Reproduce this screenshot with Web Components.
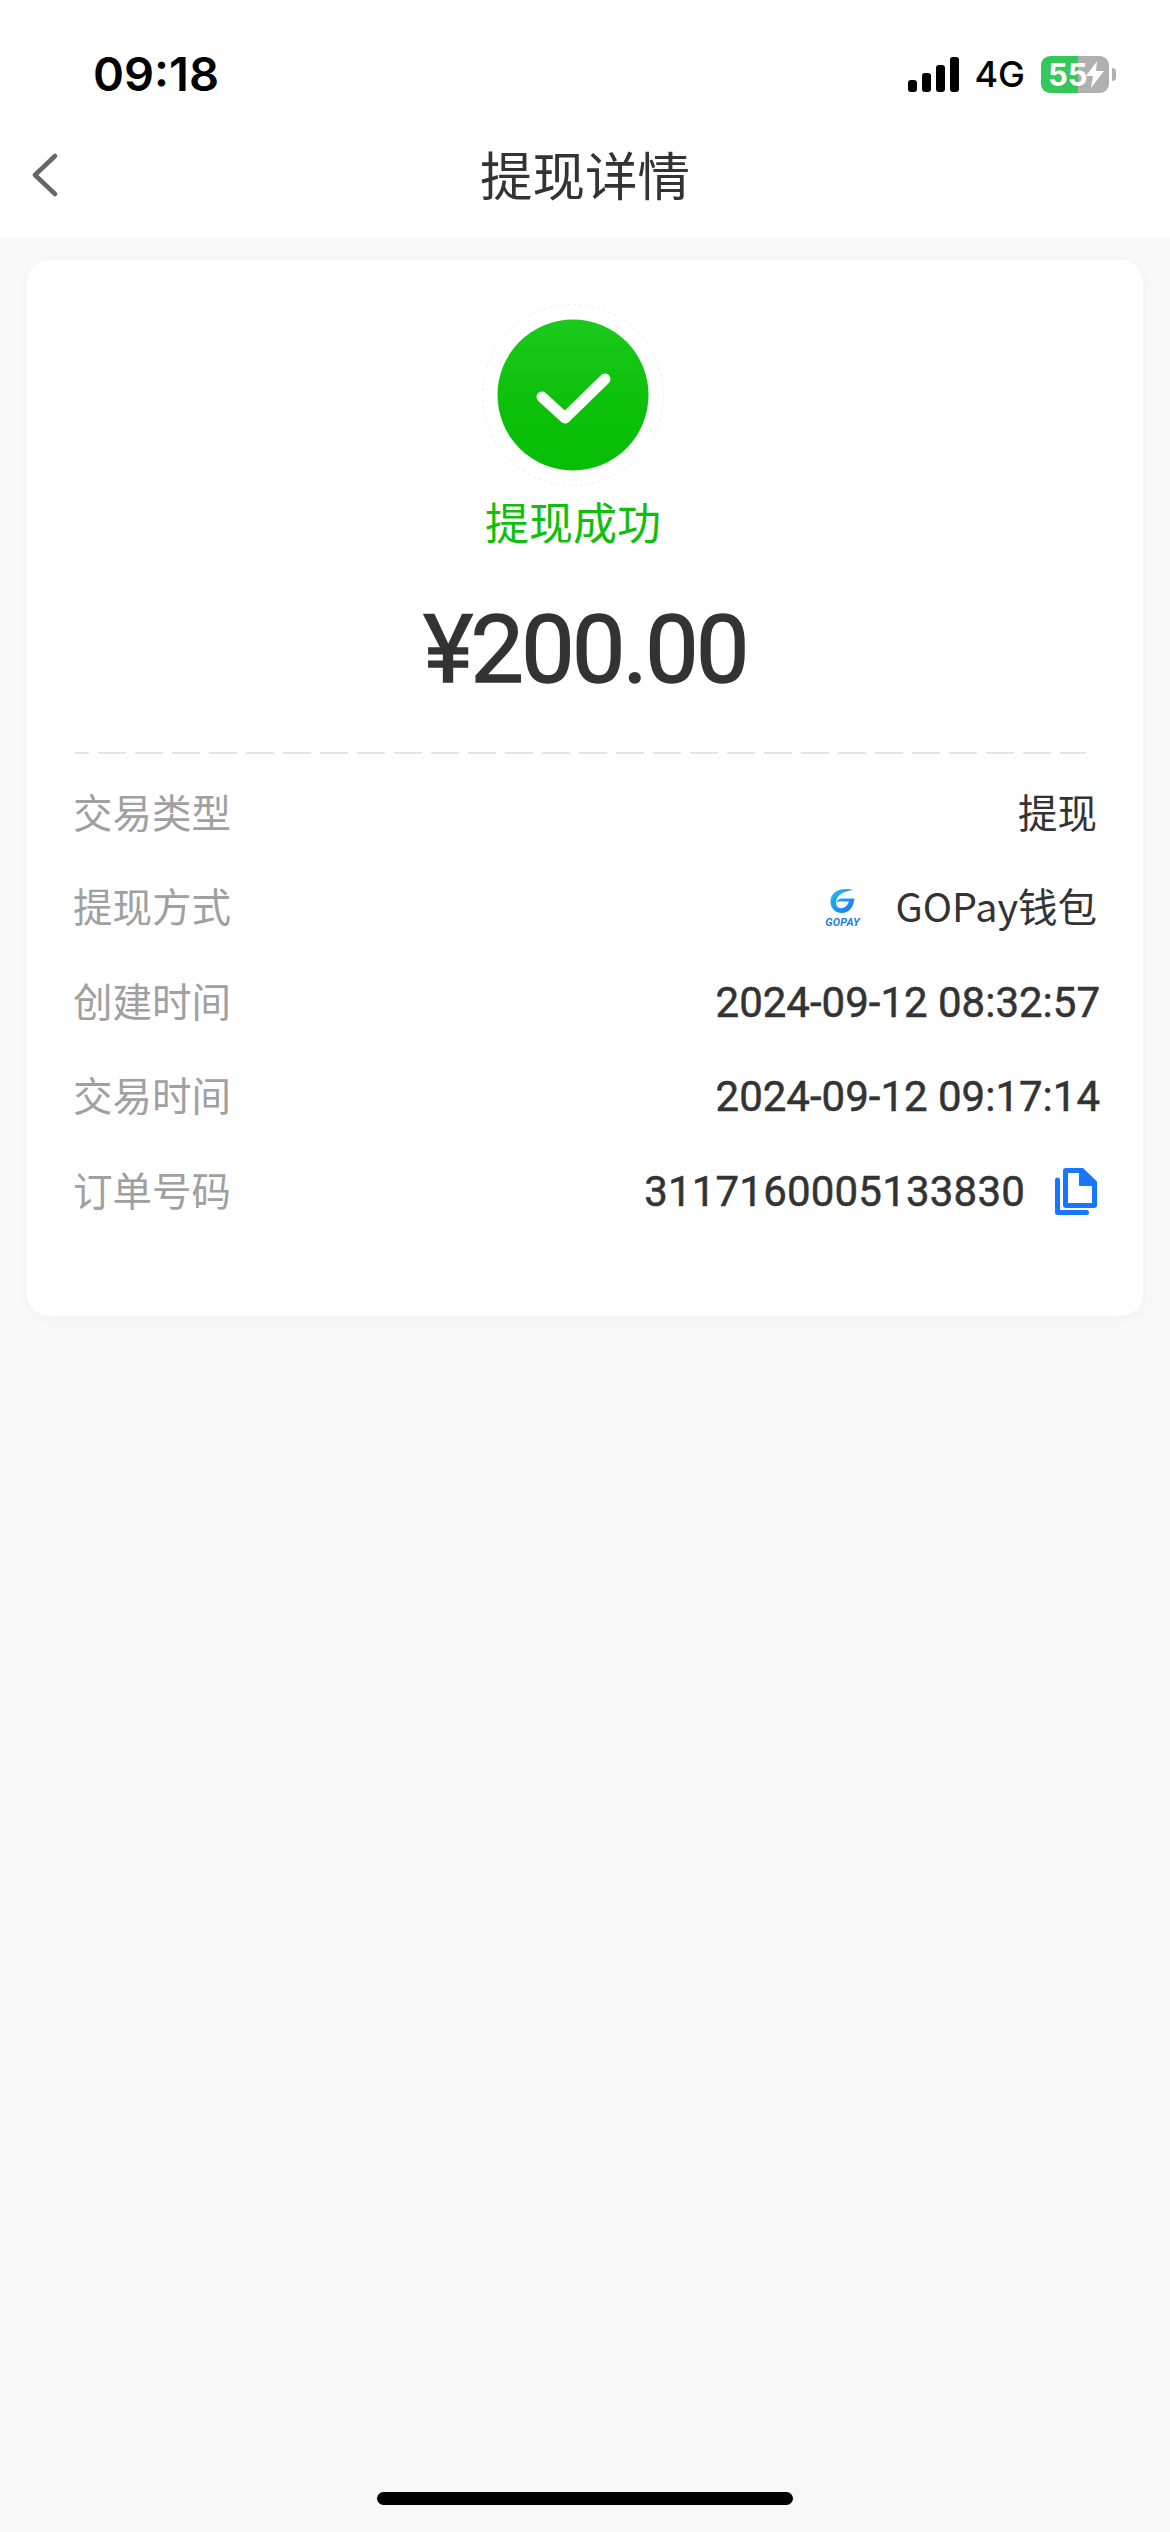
<!DOCTYPE html>
<html lang="zh">
<head>
<meta charset="utf-8">
<title>提现详情</title>
<style>
  html, body { margin: 0; padding: 0; background: #f8f8f8; }
  body { font-family: "Noto Sans CJK SC", Roboto, sans-serif; }
</style>
</head>
<body>
<withdraw-page>
  <status-bar slot="top"></status-bar>
  <nav-bar slot="top">提现详情</nav-bar>
  <detail-card>
    <result-head amount="¥200.00">提现成功</result-head>
    <detail-row label="交易类型">提现</detail-row>
    <detail-row label="提现方式"><gopay-logo slot="icon"></gopay-logo>GOPay钱包</detail-row>
    <detail-row label="创建时间" num date>2024-09-12 08:32:57</detail-row>
    <detail-row label="交易时间" num date>2024-09-12 09:17:14</detail-row>
    <detail-row label="订单号码" num>3117160005133830<copy-icon slot="after"></copy-icon></detail-row>
  </detail-card>
</withdraw-page>

<script>
class WithdrawPage extends HTMLElement {
  constructor() {
    super();
    this.attachShadow({ mode: "open" });
    this.shadowRoot.innerHTML = `
      <style>
        :host { display: flex; flex-direction: column; height: 2532px; background: #f8f8f8; overflow: hidden; }
        .top { background: #fff; }
        .home { margin: auto auto 27px; width: 416px; height: 13px; border-radius: 7px; background: #000; }
      </style>
      <div class="top"><slot name="top"></slot></div>
      <slot></slot>
      <div class="home"></div>
    `;
  }
}

class StatusBar extends HTMLElement {
  constructor() {
    super();
    this.attachShadow({ mode: "open" });
    this.shadowRoot.innerHTML = `
      <style>
        :host { display: flex; align-items: center; justify-content: space-between; height: 112px; padding: 36px 54px 0 93px; box-sizing: border-box; background: #fff; font-family: Inter, "Liberation Sans", sans-serif; color: #000; }
        .time { font-size: 47px; font-weight: 600; line-height: 76px; height: 76px; }
        .right { display: flex; align-items: center; height: 76px; }
        .net { font-size: 36px; font-weight: 500; margin: 0 16px 0 15px; }
        .bat { position: relative; width: 68px; height: 37px; border-radius: 9px; overflow: hidden; background: linear-gradient(90deg, #34c759 0 37px, #b0b0b0 37px); }
        .bat b { display: block; padding-left: 7px; color: #fff; font-size: 31px; font-weight: 700; line-height: 37px; }
        .bat svg { position: absolute; left: 44px; top: 5px; }
        .cap { width: 4px; height: 13px; margin-left: 3px; border-radius: 0 4px 4px 0; background: #b0b0b0; }
      </style>
      <span class="time">09:18</span>
      <div class="right">
        <svg width="51" height="36" viewBox="0 0 51 36" fill="#000">
          <rect x="0" y="24" width="9" height="12" rx="3"/>
          <rect x="14" y="17" width="9" height="19" rx="3"/>
          <rect x="28" y="9" width="9" height="27" rx="3"/>
          <rect x="42" y="1" width="9" height="35" rx="3"/>
        </svg>
        <span class="net">4G</span>
        <div class="bat"><b>55</b>
          <svg width="20" height="27" viewBox="0 0 20 27" fill="#fff"><path d="M12 0 1 15h7l-2 12L19 10h-8z"/></svg>
        </div>
        <div class="cap"></div>
      </div>
    `;
  }
}

class NavBar extends HTMLElement {
  constructor() {
    super();
    this.attachShadow({ mode: "open" });
    this.shadowRoot.innerHTML = `
      <style>
        :host { display: grid; grid-template-columns: 100px 1fr 100px; align-items: center; height: 126px; background: #fff; color: #333; }
        svg { margin-left: 30px; }
        .title { text-align: center; font-size: 52.500px; line-height: 70px; margin-top: -4px; }
      </style>
      <svg width="30" height="44" viewBox="0 0 30 44" fill="none" stroke="#666" stroke-width="4.5" stroke-linecap="round" stroke-linejoin="round"><path d="M25 3 5 22l20 19"/></svg>
      <div class="title"><slot></slot></div>
    `;
  }
}

class DetailCard extends HTMLElement {
  constructor() {
    super();
    this.attachShadow({ mode: "open" });
    this.shadowRoot.innerHTML = `
      <style>
        :host { display: block; margin: 22px 27px 0; padding: 44px 46px 77px; border-radius: 22px; background: #fff; box-shadow: 0 2px 10px rgba(0,0,0,.03); }
      </style>
      <slot></slot>
    `;
  }
}

class ResultHead extends HTMLElement {
  constructor() {
    super();
    this.attachShadow({ mode: "open" });
    const amount = this.getAttribute("amount");
    this.shadowRoot.innerHTML = `
      <style>
        :host { display: block; text-align: center; }
        .icon { display: block; margin: 0 auto; position: relative; left: -12px; }
        .state { position: relative; left: -12px; margin-top: 5px; font-size: 44px; line-height: 60px; color: #0fbf0c; }
        .amount { margin-top: 49px; font-family: Roboto, sans-serif; font-size: 95px; line-height: 100px; font-weight: 400; -webkit-text-stroke: 1.4px #333; letter-spacing: -2.6px; color: #333; }
        .dash { margin: 52px 11px 12px 2px; height: 2px; background: repeating-linear-gradient(90deg, #e4e4e4 0 28px, transparent 28px 37px); background-position: -14px 0; }
      </style>
      <svg class="icon" width="182" height="182" viewBox="0 0 182 182">
        <defs><linearGradient id="g" x1="0" y1="0" x2="0" y2="1"><stop offset="0" stop-color="#1bc91d"/><stop offset="0.6" stop-color="#0cc009"/><stop offset="1" stop-color="#07bd06"/></linearGradient></defs>
        <circle cx="91" cy="91" r="90.5" fill="#fff" stroke="#eee" stroke-width="1" stroke-dasharray="3 3"/>
        <circle cx="91" cy="91" r="75.5" fill="url(#g)"/>
        <path d="M60 93 83 114 123 75" fill="none" stroke="#fff" stroke-width="11" stroke-linecap="round" stroke-linejoin="round"/>
      </svg>
      <div class="state"><slot></slot></div>
      <div class="amount">${amount}</div>
      <div class="dash"></div>
    `;
  }
}

class DetailRow extends HTMLElement {
  constructor() {
    super();
    this.attachShadow({ mode: "open" });
    const label = this.getAttribute("label");
    this.shadowRoot.innerHTML = `
      <style>
        :host { display: flex; align-items: center; justify-content: space-between; height: 94.5px; font-size: 39.500px; }
        .label { color: #a0a0a0; padding-bottom: 6px; }
        .value { display: flex; align-items: center; color: #333; padding-bottom: 6px; }
        :host([num]) .value { padding-bottom: 0; font-family: Roboto, sans-serif; font-size: 42px; font-weight: 400; -webkit-text-stroke: 0.5px #333; letter-spacing: 0.2px; }
        :host([date]) .value { margin-right: -3px; letter-spacing: 0; }
        ::slotted([slot="icon"]) { margin-right: 36px; }
        ::slotted([slot="after"]) { margin-left: 30px; }
      </style>
      <span class="label">${label}</span>
      <span class="value"><slot name="icon"></slot><span><slot></slot></span><slot name="after"></slot></span>
    `;
  }
}

class GopayLogo extends HTMLElement {
  constructor() {
    super();
    this.attachShadow({ mode: "open" });
    this.shadowRoot.innerHTML = `
      <style>
        :host { display: flex; flex-direction: column; align-items: center; gap: 3px; width: 34px; margin-top: 6px; }
        span { font: italic 700 11px/11px Roboto, sans-serif; color: #1f7fe0; letter-spacing: .2px; }
      </style>
      <svg width="27" height="26" viewBox="0 0 27 27">
        <defs><linearGradient id="gp" x1="0" y1="0" x2="1" y2="1"><stop offset="0" stop-color="#1cc0f7"/><stop offset="1" stop-color="#1a74ee"/></linearGradient></defs>
        <path fill="url(#gp)" d="M25 2C12-1 1 4 1 14c0 7 5 12 12 12 7 0 12-6 13-15H13c-3 0-5 2-6 4 2-1 4-1 6-1h7c-1 4-4 7-8 7-4 0-6-4-5-8C8 7 15 3 25 2z"/>
      </svg>
      <span>GOPAY</span>
    `;
  }
}

class CopyIcon extends HTMLElement {
  constructor() {
    super();
    this.attachShadow({ mode: "open" });
    this.shadowRoot.innerHTML = `
      <style>:host { display: inline-flex; }</style>
      <svg width="42" height="47" viewBox="0 0 42 47">
        <path fill="#1677ff" d="M11 0h17l14 13.500V37a3 3 0 0 1-3 3H11a3 3 0 0 1-3-3V3a3 3 0 0 1 3-3z"/>
        <path fill="#fff" d="M13 5h11v12a1 1 0 0 0 1 1h12v17H13z"/>
        <path fill="none" stroke="#1677ff" stroke-width="5" stroke-linecap="round" stroke-linejoin="round" d="M2.500 12v32.500h29"/>
      </svg>
    `;
  }
}

customElements.define("withdraw-page", WithdrawPage);
customElements.define("status-bar", StatusBar);
customElements.define("nav-bar", NavBar);
customElements.define("detail-card", DetailCard);
customElements.define("result-head", ResultHead);
customElements.define("detail-row", DetailRow);
customElements.define("gopay-logo", GopayLogo);
customElements.define("copy-icon", CopyIcon);
</script>
</body>
</html>
